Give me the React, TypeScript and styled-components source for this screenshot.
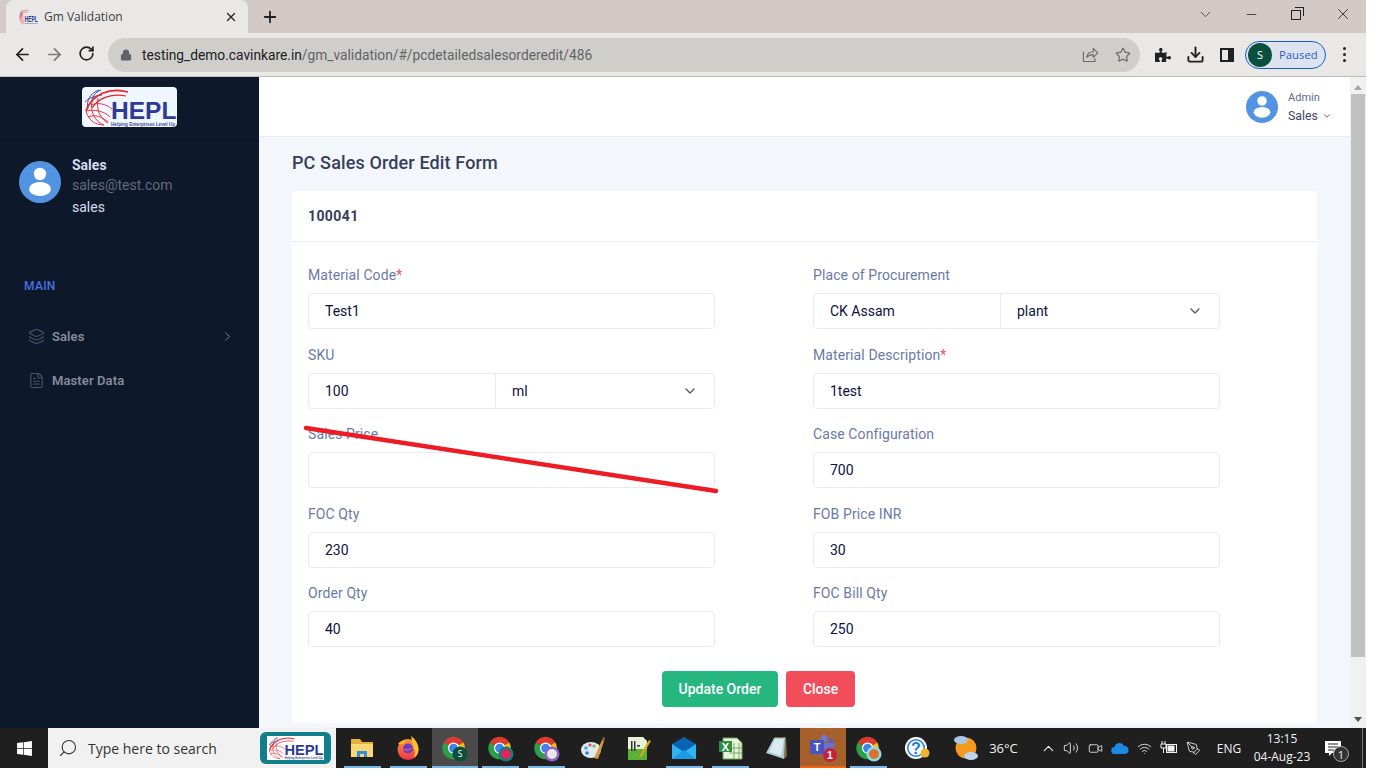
import styled, { createGlobalStyle } from "styled-components";
import {
  ArrowLeft,
  ArrowRight,
  ChevronDown,
  ChevronRight,
  ChevronUp,
  Download,
  FileText,
  Layers,
  Lock,
  Minus,
  PenTool,
  Plus,
  RotateCw,
  Search,
  Star,
  Video,
  Volume2,
  Wifi,
  X,
} from "lucide-react";
import { FaPuzzlePiece, FaWindows } from "react-icons/fa";

const GlobalStyle = createGlobalStyle`
  html, body {
    margin: 0;
    background: #fff;
  }
  * {
    box-sizing: border-box;
  }
`;

const Screen = styled.div`
  position: relative;
  width: 1366px;
  height: 768px;
  display: flex;
  flex-direction: column;
  overflow: hidden;
  font-family: Roboto, "Liberation Sans", sans-serif;
`;

/* browser chrome */
const TabStrip = styled.div`
  height: 33px;
  flex: none;
  display: flex;
  align-items: flex-end;
  padding-left: 6px;
  background: #d3cac7;
  color: #202124;
`;

const Tab = styled.div`
  width: 242px;
  height: 33px;
  display: flex;
  align-items: center;
  padding: 0 10px 0 13px;
  background: #e9e8e6;
  border-radius: 8px 8px 0 0;
  font: 12px "Open Sans", sans-serif;
  color: #3c4043;
`;

const TabTitle = styled.span`
  flex: 1;
  margin-left: 6px;
`;

const NewTab = styled.div`
  display: flex;
  align-self: center;
  margin-left: 13px;
`;

const WindowControls = styled.div`
  margin-left: auto;
  display: flex;
  align-self: flex-start;
  height: 28px;
`;

const WindowButton = styled.div`
  width: 46px;
  height: 28px;
  display: flex;
  align-items: center;
  justify-content: center;
`;

const RestoreIcon = styled.div`
  position: relative;
  width: 10px;
  height: 10px;
  margin: 2px 2px 0 0;
  border: 1px solid #202124;
  background: #d3cac7;
  &::before {
    content: "";
    position: absolute;
    top: -4px;
    right: -4px;
    width: 8px;
    height: 8px;
    border-top: 1px solid #202124;
    border-right: 1px solid #202124;
  }
`;

const Toolbar = styled.div`
  height: 44px;
  flex: none;
  display: flex;
  align-items: center;
  background: #e9e8e6;
  border-bottom: 1px solid #bcbcbc;
`;

const NavButton = styled.div`
  width: 32px;
  display: flex;
  justify-content: center;
  color: #202124;
`;

const NavGroup = styled.div`
  display: flex;
  padding-left: 6px;
  margin-right: 6px;
`;

const Omnibox = styled.div`
  width: 1032px;
  height: 34px;
  display: flex;
  align-items: center;
  padding: 0 1px 0 12px;
  background: #cfcecb;
  border-radius: 17px;
  color: #5f6368;
`;

const Url = styled.div`
  flex: 1;
  margin-left: 10px;
  font: 13.75px Roboto, sans-serif;
  color: #5f6368;
  span {
    color: #202124;
  }
`;

const OmniAction = styled.div`
  width: 33px;
  display: flex;
  justify-content: center;
  color: #6a6c6f;
`;

const ToolActions = styled.div`
  display: flex;
  align-items: center;
  flex: 1;
  padding-left: 7px;
`;

const ToolIcon = styled.div`
  width: 32px;
  display: flex;
  justify-content: center;
  color: #202124;
`;

const SidePanelIcon = styled.div`
  width: 14px;
  height: 14px;
  border: 2px solid #202124;
  border-right-width: 6px;
`;

const ProfilePill = styled.div`
  width: 81px;
  height: 28px;
  margin-left: 2px;
  display: flex;
  align-items: center;
  padding-left: 2px;
  border: 1px solid #1a5fc4;
  border-radius: 14px;
  background: #dde3ee;
  font: 11.3px "Open Sans", sans-serif;
  color: #2c5cc5;
`;

const ProfileBadge = styled.div`
  width: 24px;
  height: 24px;
  margin-right: 7px;
  border-radius: 50%;
  background: #0b4f3f;
  color: #fff;
  font-size: 11px;
  display: flex;
  align-items: center;
  justify-content: center;
`;

const Kebab = styled.div`
  margin-left: 17px;
  display: flex;
  flex-direction: column;
  gap: 3px;
  i {
    width: 3px;
    height: 3px;
    border-radius: 50%;
    background: #202124;
  }
`;

/* app shell */
const Main = styled.div`
  flex: 1;
  min-height: 0;
  display: flex;
`;

const Sidebar = styled.aside`
  width: 259px;
  flex: none;
  background: #0e182b;
`;

const LogoBar = styled.div`
  height: 60px;
  display: flex;
  align-items: flex-start;
  justify-content: center;
  padding-top: 10px;
  border-bottom: 1px solid #111c30;
`;

const LogoCard = styled.div`
  width: 95px;
  height: 40px;
  display: flex;
  border-radius: 4px;
  background: #f0f6fd;
`;

const UserBlock = styled.div`
  display: flex;
  align-items: flex-start;
  gap: 11px;
  padding: 18px 0 0 19px;
  > svg {
    margin-top: 6px;
  }
`;

const UserText = styled.div`
  font-size: 14px;
`;

const UserName = styled.div`
  line-height: 21px;
  font-weight: 700;
  color: #d5dcef;
`;

const UserMail = styled.div`
  line-height: 19px;
  color: #636b7b;
`;

const UserRole = styled.div`
  line-height: 21px;
  margin-top: 2px;
  color: #d5dcef;
`;

const MenuTitle = styled.div`
  margin: 59px 0 0 24px;
  font-size: 12px;
  line-height: 18px;
  font-weight: 500;
  letter-spacing: 0.3px;
  color: #4a6fe0;
`;

const Menu = styled.nav`
  margin-top: 19px;
`;

const MenuItem = styled.div`
  height: 44px;
  display: flex;
  align-items: center;
  gap: 7px;
  padding: 0 24px 0 28px;
  font-size: 13px;
  font-weight: 600;
  letter-spacing: 0.1px;
  color: #858b9b;
  svg {
    color: #4b5570;
  }
`;

const MenuArrow = styled.span`
  margin-left: auto;
  display: flex;
  svg {
    color: #7f8697;
  }
`;

const Page = styled.div`
  flex: 1;
  min-width: 0;
  display: flex;
  flex-direction: column;
  background: #f3f6fa;
`;

const Header = styled.header`
  height: 60px;
  flex: none;
  display: flex;
  align-items: center;
  justify-content: flex-end;
  gap: 10px;
  padding: 0 18px 0 0;
  background: #fff;
  border-bottom: 1px solid #e8ecf3;
`;

const HeaderText = styled.div`
  width: 44px;
`;

const HeaderRole = styled.div`
  font-size: 11px;
  line-height: 18px;
  color: #5e6b8c;
`;

const HeaderName = styled.div`
  display: flex;
  align-items: center;
  gap: 4px;
  font-size: 12.3px;
  line-height: 18px;
  color: #3a4560;
`;

const Content = styled.main`
  flex: 1;
  min-height: 0;
  overflow: hidden;
  padding: 0 33px;
`;

const PageTitle = styled.h1`
  margin: 13px 0 16px;
  font-size: 18px;
  line-height: 25px;
  font-weight: 500;
  letter-spacing: 0.13px;
  color: #363f5a;
`;

const Card = styled.section`
  background: #fff;
  border-radius: 4px;
  height: 532px;
`;

const CardHead = styled.div`
  height: 51px;
  display: flex;
  align-items: center;
  padding-left: 16px;
  border-bottom: 1px solid #e9ebf3;
  font-size: 14px;
  font-weight: 700;
  letter-spacing: 0.4px;
  color: #363f5a;
`;

const FormGrid = styled.div`
  display: grid;
  grid-template-columns: 407px 407px;
  grid-auto-rows: 79.65px;
  column-gap: 98px;
  padding: 22.9px 16px 0;
`;

const Field = styled.div`
  display: flex;
  flex-direction: column;
`;

const Label = styled.label`
  height: 21px;
  margin-bottom: 7px;
  font-size: 14px;
  line-height: 21px;
  letter-spacing: 0.1px;
  color: #6a7aa6;
`;

const Required = styled.span`
  color: #f1506a;
`;

const InputBox = styled.div`
  height: 36px;
  display: flex;
  border: 1px solid #e8e9f5;
  border-radius: 4px;
  background: #fff;
  font-size: 14px;
  color: #0c1140;
`;

const Cell = styled.div<{ $select?: boolean }>`
  flex: ${(p) => (p.$select ? "1" : "none")};
  width: ${(p) => (p.$select ? "auto" : "186px")};
  display: flex;
  align-items: center;
  justify-content: space-between;
  padding: 0 16px;
  border-left: ${(p) => (p.$select ? "1px solid #e8e9f5" : "none")};
  svg {
    color: #49506b;
  }
`;

const SingleCell = styled.div`
  flex: 1;
  display: flex;
  align-items: center;
  padding: 0 16px;
`;

const Actions = styled.div`
  display: flex;
  gap: 8px;
  margin: 7.85px 0 0 370px;
`;

const Button = styled.button<{ $tone: "green" | "red" }>`
  height: 36px;
  padding: 0 ${(p) => (p.$tone === "green" ? "16.5px" : "17px")};
  border: 0;
  border-radius: 4px;
  background: ${(p) => (p.$tone === "green" ? "#26b67f" : "#f14d5a")};
  color: #fff;
  font: 500 14px Roboto, sans-serif;
`;

const Scrollbar = styled.div`
  width: 16px;
  flex: none;
  display: flex;
  flex-direction: column;
  align-items: center;
  background: #f1f1f1;
`;

const ScrollArrow = styled.div<{ $down?: boolean }>`
  width: 0;
  height: 0;
  margin: ${(p) => (p.$down ? "auto 0 6px" : "8px 0 4px")};
  border-left: 4px solid transparent;
  border-right: 4px solid transparent;
  border-bottom: ${(p) => (p.$down ? "0" : "5px solid #a3a3a3")};
  border-top: ${(p) => (p.$down ? "5px solid #505050" : "0")};
`;

const ScrollThumb = styled.div`
  width: 14px;
  height: 563px;
  background: #c1c1c1;
`;

const Strike = styled.svg`
  position: absolute;
  left: 300px;
  top: 420px;
  pointer-events: none;
`;

/* windows taskbar */
const Taskbar = styled.footer`
  height: 40px;
  flex: none;
  display: flex;
  background: #1f1f1f;
  color: #f2f2f2;
`;

const StartButton = styled.div`
  width: 48px;
  display: flex;
  align-items: center;
  justify-content: center;
`;

const SearchBox = styled.div`
  width: 288px;
  margin-right: 3.5px;
  display: flex;
  align-items: center;
  padding-left: 10px;
  background: #f1f1f1;
  color: #333;
  font: 14px "Open Sans", sans-serif;
`;

const SearchLabel = styled.span`
  flex: 1;
  margin-left: 10px;
  white-space: nowrap;
`;

const SearchLogo = styled.div`
  width: 71px;
  height: 32px;
  margin-right: 5px;
  display: flex;
  align-items: center;
  justify-content: center;
  border-radius: 6px;
  background: #0f7f8c;
`;

const SearchLogoInner = styled.div`
  width: 57px;
  height: 24px;
  display: flex;
  background: #fff;
`;

const AppSlot = styled.div<{ $state: "open" | "active" | "alert" | "idle" }>`
  position: relative;
  width: 46px;
  display: flex;
  align-items: center;
  justify-content: center;
  background: ${(p) =>
    p.$state === "active" ? "#4a4a4a" : p.$state === "alert" ? "#a5602b" : "transparent"};
  &::after {
    content: "";
    display: ${(p) => (p.$state === "idle" ? "none" : "block")};
    position: absolute;
    bottom: 0;
    left: ${(p) => (p.$state === "open" ? "4px" : "0")};
    right: ${(p) => (p.$state === "open" ? "5px" : "0")};
    height: 2px;
    background: ${(p) => (p.$state === "alert" ? "#f7630c" : "#76b9ed")};
  }
`;

const TrayItem = styled.div<{ $w: number; $gap?: number; $large?: boolean }>`
  width: ${(p) => p.$w}px;
  margin-left: ${(p) => p.$gap ?? 0}px;
  display: flex;
  align-items: center;
  justify-content: center;
  font: ${(p) => (p.$large ? "13px" : "12px")} "Open Sans", sans-serif;
  color: #f2f2f2;
  white-space: nowrap;
`;

const Clock = styled.div`
  width: 60px;
  display: flex;
  flex-direction: column;
  align-items: center;
  justify-content: center;
  gap: 2px;
  font: 12px/16px "Open Sans", sans-serif;
`;

const NotifyWrap = styled.div`
  position: relative;
  width: 42px;
  display: flex;
  align-items: center;
  justify-content: center;
`;

const NotifyBadge = styled.span`
  position: absolute;
  left: 21px;
  top: 18px;
  width: 16px;
  height: 16px;
  display: flex;
  align-items: center;
  justify-content: center;
  border: 1px solid #aaa;
  border-radius: 50%;
  background: #333;
  font: 11px "Open Sans", sans-serif;
`;

const ShowDesktop = styled.div`
  margin-left: auto;
  margin-right: 3px;
  width: 1px;
  background: #777;
`;

function HeplMark({ width, height, stretch }: { width: number; height: number; stretch?: boolean }) {
  return (
    <svg
      width={width}
      height={height}
      viewBox="0 0 95 40"
      preserveAspectRatio={stretch ? "none" : "xMidYMid meet"}
    >
      <g fill="none" strokeWidth="0.9">
        <path d="M6 22C4 14 8 6 17 3M10 15C10 10 13 5 19 3M3 15C7 11 12 9 20 8" stroke="#2f3a97" />
        <path d="M4 24C6 32 12 38 22 38M10 14C8 24 12 34 22 38M16 11C14 22 18 32 26 36" stroke="#e8262b" />
        <path d="M4 24C12 22 22 24 28 30M6 30C14 27 20 30 26 35M9 18C16 15 24 17 30 22" stroke="#e8262b" />
        <path d="M46 5C28 0 10 7 4 24" stroke="#e8262b" strokeWidth="1.8" />
        <path d="M44 9C30 6 16 11 10 21" stroke="#e8262b" strokeWidth="1.2" />
      </g>
      <text
        x="29"
        y="31.5"
        fontFamily="Liberation Sans, sans-serif"
        fontWeight="700"
        fontSize="24.5"
        fill="#2f3a97"
      >
        HEPL
      </text>
      <text
        x="29"
        y="38.5"
        fontFamily="Liberation Sans, sans-serif"
        fontWeight="700"
        fontSize="4.6"
        textLength="64"
        lengthAdjust="spacingAndGlyphs"
        fill="#3f4aa3"
      >
        Helping Enterprises Level Up
      </text>
    </svg>
  );
}

function Person({ size }: { size: number }) {
  return (
    <svg width={size} height={size} viewBox="0 0 42 42">
      <circle cx="21" cy="21" r="21" fill="#5294e2" />
      <circle cx="21" cy="13" r="6.2" fill="#fff" />
      <ellipse cx="21" cy="28" rx="11" ry="7" fill="#fff" />
    </svg>
  );
}

function ShareIcon() {
  return (
    <svg width="18" height="18" viewBox="0 0 22 22" fill="none" stroke="currentColor" strokeWidth="1.4" strokeLinejoin="round">
      <path d="M3 7v12h14v-4" />
      <path d="M7 14c.5-4.500 3.500-7 8-7V3l5.500 5.500L15 14v-3.500c-3.500 0-6 1-8 3.500z" />
    </svg>
  );
}

function ChromeIcon({ ring, core, label }: { ring: string; core?: string; label?: string }) {
  return (
    <svg width="28" height="28" viewBox="0 0 28 28">
      <g transform="translate(-1 0.500) scale(1.130)">
        <path d="M12 12L3.340 7A10 10 0 0 1 20.660 7Z" fill="#dd3b2f" />
        <path d="M12 12L20.660 7A10 10 0 0 1 12 22Z" fill="#f4c20d" />
        <path d="M12 12L12 22A10 10 0 0 1 3.340 7Z" fill="#2c9f48" />
        <circle cx="12" cy="12" r="5" fill="#fff" />
        <circle cx="12" cy="12" r="3.900" fill="#3f83ec" />
      </g>
      <circle cx="19" cy="20" r="7.500" fill={ring} />
      {core && <circle cx="19" cy="20" r="5" fill={core} />}
      {label && (
        <text x="19" y="23" fontSize="8.500" textAnchor="middle" fill="#fff" fontFamily="Open Sans, sans-serif">
          {label}
        </text>
      )}
    </svg>
  );
}

function Explorer() {
  return (
    <svg width="24" height="24" viewBox="0 0 24 24">
      <path d="M0 3h9l2 3h11v15H0z" fill="#e5b23c" />
      <path d="M0 8h22v13H0z" fill="#f9d976" />
      <path d="M6 21v-6h10v6h-3v-3h-4v3z" fill="#2f8fdc" />
    </svg>
  );
}

function Firefox() {
  return (
    <svg width="26" height="26" viewBox="0 0 26 26">
      <defs>
        <linearGradient id="foxBody" x1="0" y1="0" x2="0" y2="1">
          <stop offset="0" stopColor="#ff9a2b" />
          <stop offset="1" stopColor="#f0324f" />
        </linearGradient>
      </defs>
      <circle cx="12" cy="14.500" r="10.500" fill="url(#foxBody)" />
      <path d="M15 1c4 3 8 8 7.500 14-.5 5-3 7-5 8 2-4 2-8-.5-11-.5-4-1-7-2-11z" fill="#ffc02e" />
      <path d="M2 9c2-3 5-4 9-4-2 1-3 2-3 4-3 0-4 0-6 0z" fill="#ffb321" />
      <circle cx="12" cy="13.500" r="5" fill="#6a3bc8" />
      <path d="M7 13c2 2 6 2 9-1-1 4-7 5-9 1z" fill="#ff7139" />
    </svg>
  );
}

function Paint() {
  return (
    <svg width="26" height="26" viewBox="0 0 26 26">
      <ellipse cx="11" cy="15" rx="10" ry="8" fill="#dfe9ef" />
      <circle cx="6" cy="13" r="1.800" fill="#3fa7e0" />
      <circle cx="10" cy="10" r="1.600" fill="#e2574c" />
      <circle cx="14" cy="11" r="1.600" fill="#6dbb4f" />
      <circle cx="7" cy="18" r="1.800" fill="#2f78c7" />
      <path d="M14 23L22 5l2 1-6 18z" fill="#d99a45" />
      <path d="M22 5l1-3 2 1-1 4z" fill="#8f6a3f" />
    </svg>
  );
}

function Pad() {
  return (
    <svg width="26" height="28" viewBox="0 0 26 28">
      <path d="M2 3h15l4 4v19H2z" fill="#e9f2d8" />
      <path d="M2 15h19v11H2z" fill="#5cb135" />
      <path d="M5 7h1.500v10H5zM8 7h1.500v10H8zM11 11h3v1.500h-3z" fill="#333" />
      <path d="M14 21L23 6l2 1-9 15-3 2z" fill="#d9a520" />
    </svg>
  );
}

function Mail() {
  return (
    <svg width="26" height="26" viewBox="0 0 26 26">
      <path d="M0 9l12-7 12 7v15H0z" fill="#0a64b4" />
      <path d="M0 9l12 8 12-8v15H0z" fill="#32b2f0" />
      <path d="M0 24l12-9 12 9z" fill="#1d9be3" />
    </svg>
  );
}

function Excel() {
  return (
    <svg width="26" height="26" viewBox="0 0 26 26">
      <path d="M5 3h14l5 5v16H5z" fill="#e9f3dc" stroke="#6fa257" />
      <path d="M11 13h13M11 18h13M16 8v16M21 8v16" stroke="#78a860" />
      <rect x="1" y="6" width="13" height="11" fill="#2f8f46" />
      <text x="7.500" y="15.500" fontSize="11" fontWeight="700" textAnchor="middle" fill="#fff" fontFamily="Liberation Sans, sans-serif">
        X
      </text>
    </svg>
  );
}

function Notes() {
  return (
    <svg width="26" height="26" viewBox="0 0 26 26">
      <path d="M10 2h12l1 19-3 3z" fill="#7e6a44" />
      <path d="M10 3h11l-1 21L2 18z" fill="#a8ccd6" />
      <path d="M11 4h9l-3 17-12-4z" fill="#dbeaee" />
    </svg>
  );
}

function Teams() {
  return (
    <svg width="30" height="30" viewBox="0 0 30 30">
      <circle cx="16" cy="5.500" r="3.500" fill="#6f77d8" />
      <circle cx="23" cy="8" r="2.500" fill="#5961c4" />
      <path d="M11 10h15v9a6 6 0 0 1-12 3h-3z" fill="#6870d0" />
      <rect x="2" y="7" width="14" height="14" rx="1" fill="#4b53bc" />
      <text x="9" y="18" fontSize="11" fontWeight="700" textAnchor="middle" fill="#fff" fontFamily="Liberation Sans, sans-serif">
        T
      </text>
      <circle cx="22" cy="22" r="7" fill="#c4213a" />
      <text x="22" y="26" fontSize="10.500" fontWeight="700" textAnchor="middle" fill="#fff" fontFamily="Liberation Sans, sans-serif">
        1
      </text>
    </svg>
  );
}

function HelpIcon() {
  return (
    <svg width="28" height="28" viewBox="0 0 28 28">
      <circle cx="13" cy="14" r="11" fill="#fff" />
      <circle cx="13" cy="14" r="9" fill="#1b7fd6" />
      <circle cx="13" cy="14" r="7.500" fill="#fff" />
      <text x="13" y="20" fontSize="16" fontWeight="700" textAnchor="middle" fill="#1b7fd6" fontFamily="Liberation Sans, sans-serif">
        ?
      </text>
      <circle cx="22" cy="19" r="4.500" fill="#f3b52e" />
    </svg>
  );
}

function Weather() {
  return (
    <svg width="28" height="30" viewBox="0 0 28 30">
      <circle cx="14" cy="15" r="10.500" fill="#f39a1f" />
      <ellipse cx="9" cy="7" rx="7" ry="4" fill="#a9c8e8" />
      <ellipse cx="19" cy="23" rx="7" ry="4" fill="#bcd5ee" />
    </svg>
  );
}

function OneDrive() {
  return (
    <svg width="18" height="12" viewBox="0 0 18 12">
      <path d="M4 12a3.500 3.500 0 0 1-.5-7A5 5 0 0 1 13 4a4 4 0 0 1 1 8z" fill="#1e88e5" />
    </svg>
  );
}

function Battery() {
  return (
    <svg width="18" height="16" viewBox="0 0 18 16" fill="none" stroke="#f2f2f2">
      <rect x="6.500" y="4.500" width="10" height="8" />
      <rect x="8" y="6" width="6" height="5" fill="#f2f2f2" />
      <path d="M1 4h5v4H1zM2 1v3M5 1v3M3.500 8v5" />
    </svg>
  );
}

function NotifyIcon() {
  return (
    <svg width="16" height="15" viewBox="0 0 16 15" fill="none">
      <path d="M0 0h16v12H7l-3 3v-3H0z" fill="#fff" />
      <path d="M3 3h10M3 6h10M3 9h6" stroke="#222" />
    </svg>
  );
}

type FieldData = {
  label: string;
  value?: string;
  required?: boolean;
  select?: string;
};

const fields: FieldData[] = [
  { label: "Material Code", value: "Test1", required: true },
  { label: "Place of Procurement", value: "CK Assam", select: "plant" },
  { label: "SKU", value: "100", select: "ml" },
  { label: "Material Description", value: "1test", required: true },
  { label: "Sales Price", value: "" },
  { label: "Case Configuration", value: "700" },
  { label: "FOC Qty", value: "230" },
  { label: "FOB Price INR", value: "30" },
  { label: "Order Qty", value: "40" },
  { label: "FOC Bill Qty", value: "250" },
];

export default function App() {
  return (
    <>
      <GlobalStyle />
      <Screen>
        <TabStrip>
          <Tab>
            <HeplMark width={19} height={16} stretch />
            <TabTitle>Gm Validation</TabTitle>
            <X size={14} color="#202124" strokeWidth={2.2} />
          </Tab>
          <NewTab>
            <Plus size={18} strokeWidth={2.4} />
          </NewTab>
          <WindowControls>
            <WindowButton>
              <ChevronDown size={17} strokeWidth={1} />
            </WindowButton>
            <WindowButton>
              <Minus size={15} strokeWidth={1.2} />
            </WindowButton>
            <WindowButton>
              <RestoreIcon />
            </WindowButton>
            <WindowButton>
              <X size={18} strokeWidth={1.1} />
            </WindowButton>
          </WindowControls>
        </TabStrip>

        <Toolbar>
          <NavGroup>
            <NavButton>
              <ArrowLeft size={19} strokeWidth={2.2} />
            </NavButton>
            <NavButton>
              <ArrowRight size={19} strokeWidth={2.2} color="#77797c" />
            </NavButton>
            <NavButton>
              <RotateCw size={17} strokeWidth={2.4} />
            </NavButton>
          </NavGroup>
          <Omnibox>
            <Lock size={12} fill="#5f6368" strokeWidth={2.4} />
            <Url>
              <span>testing_demo.cavinkare.in</span>/gm_validation/#/pcdetailedsalesorderedit/486
            </Url>
            <OmniAction>
              <ShareIcon />
            </OmniAction>
            <OmniAction>
              <Star size={16} strokeWidth={1.8} />
            </OmniAction>
          </Omnibox>
          <ToolActions>
            <ToolIcon>
              <FaPuzzlePiece size={16} />
            </ToolIcon>
            <ToolIcon>
              <Download size={19} strokeWidth={2.4} />
            </ToolIcon>
            <ToolIcon>
              <SidePanelIcon />
            </ToolIcon>
            <ProfilePill>
              <ProfileBadge>S</ProfileBadge>
              Paused
            </ProfilePill>
            <Kebab>
              <i />
              <i />
              <i />
            </Kebab>
          </ToolActions>
        </Toolbar>

        <Main>
          <Sidebar>
            <LogoBar>
              <LogoCard>
                <HeplMark width={95} height={40} />
              </LogoCard>
            </LogoBar>
            <UserBlock>
              <Person size={42} />
              <UserText>
                <UserName>Sales</UserName>
                <UserMail>sales@test.com</UserMail>
                <UserRole>sales</UserRole>
              </UserText>
            </UserBlock>
            <MenuTitle>MAIN</MenuTitle>
            <Menu>
              <MenuItem>
                <Layers size={17} strokeWidth={1.5} />
                Sales
                <MenuArrow>
                  <ChevronRight size={15} strokeWidth={1.5} />
                </MenuArrow>
              </MenuItem>
              <MenuItem>
                <FileText size={17} strokeWidth={1.5} />
                Master Data
              </MenuItem>
            </Menu>
          </Sidebar>

          <Page>
            <Header>
              <Person size={32} />
              <HeaderText>
                <HeaderRole>Admin</HeaderRole>
                <HeaderName>
                  Sales <ChevronDown size={10} strokeWidth={2} />
                </HeaderName>
              </HeaderText>
            </Header>
            <Content>
              <PageTitle>PC Sales Order Edit Form</PageTitle>
              <Card>
                <CardHead>100041</CardHead>
                <FormGrid>
                  {fields.map((f) => (
                    <Field key={f.label}>
                      <Label>
                        {f.label}
                        {f.required && <Required>*</Required>}
                      </Label>
                      <InputBox>
                        {f.select ? (
                          <>
                            <Cell>{f.value}</Cell>
                            <Cell $select>
                              {f.select}
                              <ChevronDown size={16} strokeWidth={1.8} />
                            </Cell>
                          </>
                        ) : (
                          <SingleCell>{f.value}</SingleCell>
                        )}
                      </InputBox>
                    </Field>
                  ))}
                </FormGrid>
                <Actions>
                  <Button $tone="green">Update Order</Button>
                  <Button $tone="red">Close</Button>
                </Actions>
              </Card>
            </Content>
          </Page>

          <Scrollbar>
            <ScrollArrow />
            <ScrollThumb />
            <ScrollArrow $down />
          </Scrollbar>
        </Main>

        <Strike width="424" height="80" viewBox="0 0 424 80">
          <path d="M6 8L416 71" stroke="#ed1c24" strokeWidth="4.500" strokeLinecap="round" />
        </Strike>

        <Taskbar>
          <StartButton>
            <FaWindows size={17} color="#fff" />
          </StartButton>
          <SearchBox>
            <Search size={20} strokeWidth={1.3} style={{ transform: "scaleX(-1)" }} />
            <SearchLabel>Type here to search</SearchLabel>
            <SearchLogo>
              <SearchLogoInner>
                <HeplMark width={57} height={24} />
              </SearchLogoInner>
            </SearchLogo>
          </SearchBox>
          <AppSlot $state="open">
            <Explorer />
          </AppSlot>
          <AppSlot $state="open">
            <Firefox />
          </AppSlot>
          <AppSlot $state="active">
            <ChromeIcon ring="#0b4f3f" label="S" />
          </AppSlot>
          <AppSlot $state="open">
            <ChromeIcon ring="#12807a" core="#e0245e" />
          </AppSlot>
          <AppSlot $state="open">
            <ChromeIcon ring="#8a63c9" core="#e8e8e8" />
          </AppSlot>
          <AppSlot $state="idle">
            <Paint />
          </AppSlot>
          <AppSlot $state="idle">
            <Pad />
          </AppSlot>
          <AppSlot $state="open">
            <Mail />
          </AppSlot>
          <AppSlot $state="open">
            <Excel />
          </AppSlot>
          <AppSlot $state="idle">
            <Notes />
          </AppSlot>
          <AppSlot $state="alert">
            <Teams />
          </AppSlot>
          <AppSlot $state="open">
            <ChromeIcon ring="#8fd8e8" core="#d9722c" />
          </AppSlot>

          <TrayItem $w={46} $gap={2.5}>
            <HelpIcon />
          </TrayItem>
          <TrayItem $w={38} $gap={7}>
            <Weather />
          </TrayItem>
          <TrayItem $w={37} $large>
            36°C
          </TrayItem>
          <TrayItem $w={22} $gap={15}>
            <ChevronUp size={17} strokeWidth={1.5} />
          </TrayItem>
          <TrayItem $w={24.5}>
            <Volume2 size={16} strokeWidth={1.3} />
          </TrayItem>
          <TrayItem $w={24.5}>
            <Video size={15} strokeWidth={1.3} />
          </TrayItem>
          <TrayItem $w={24.5}>
            <OneDrive />
          </TrayItem>
          <TrayItem $w={24.5}>
            <Wifi size={15} strokeWidth={1.3} />
          </TrayItem>
          <TrayItem $w={24.5}>
            <Battery />
          </TrayItem>
          <TrayItem $w={24.5}>
            <PenTool size={15} strokeWidth={1.3} />
          </TrayItem>
          <TrayItem $w={46}>ENG</TrayItem>
          <Clock>
            <span>13:15</span>
            <span>04-Aug-23</span>
          </Clock>
          <NotifyWrap>
            <NotifyIcon />
            <NotifyBadge>1</NotifyBadge>
          </NotifyWrap>
          <ShowDesktop />
        </Taskbar>
      </Screen>
    </>
  );
}
